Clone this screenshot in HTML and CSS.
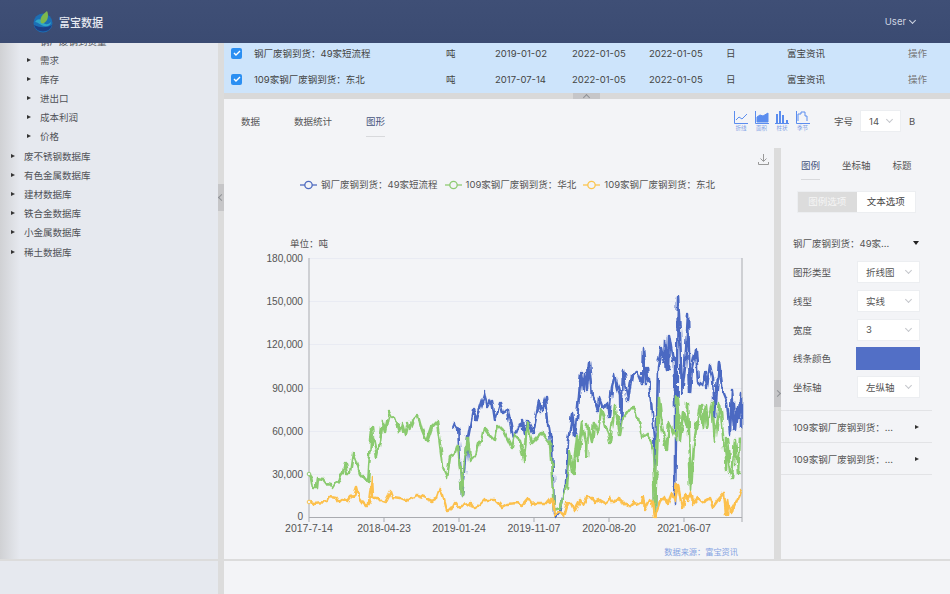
FILE: index.html
```html
<!DOCTYPE html>
<html lang="zh-CN">
<head>
	<meta charset="UTF-8">
	<title>富宝数据</title>
	<link rel="stylesheet" href="styles.css">
</head>
<body>
	<div class="header">
		<div class="brand">
			<svg class="logo" width="20" height="22" viewBox="0 0 20 22">
				<circle cx="10" cy="12" r="9.5" fill="#1c6fb5"/>
				<path d="M1 14a9.5 9.5 0 0 0 18 0c-5 3-12 3-18 0z" fill="#1d3f86"/>
				<path d="M2 11c3-4 6-3 8 0s5 3 8 0c0 3-3 5-7 4s-6-4-9-4z" fill="#2fa6c9"/>
				<path d="M8 12C6 7 10 3 14 0c2 4 1 10-3 12-1 .5-2 .5-3 0z" fill="#7db84c"/>
			</svg>
			<span class="brand-name">富宝数据</span>
		</div>
		<div class="user">User <i class="chev chev-light"></i></div>
	</div>

	<div class="main">
		<div class="side">
			<ul class="tree">
				<li class="sub"><i class="tri"></i>钢厂废钢到货量</li>
				<li class="sub"><i class="tri"></i>需求</li>
				<li class="sub"><i class="tri"></i>库存</li>
				<li class="sub"><i class="tri"></i>进出口</li>
				<li class="sub"><i class="tri"></i>成本利润</li>
				<li class="sub"><i class="tri"></i>价格</li>
				<li><i class="tri"></i>废不锈钢数据库</li>
				<li><i class="tri"></i>有色金属数据库</li>
				<li><i class="tri"></i>建材数据库</li>
				<li><i class="tri"></i>铁合金数据库</li>
				<li><i class="tri"></i>小金属数据库</li>
				<li><i class="tri"></i>稀土数据库</li>
			</ul>
		</div>
		<div class="split-v">
			<span class="handle handle-side"><i class="chev chev-left"></i></span>
		</div>
		<div class="content">
			<div class="tbl">
				<div class="tbl-row">
					<span class="check"><svg width="8" height="8" viewBox="0 0 8 8"><path d="M1 4l2 2 4-4" fill="none" stroke="#fff" stroke-width="1.4"/></svg></span>
					<span class="c-name">钢厂废钢到货：49家短流程</span>
					<span class="c-unit">吨</span>
					<span class="c-date">2019-01-02</span>
					<span class="c-date">2022-01-05</span>
					<span class="c-date">2022-01-05</span>
					<span class="c-freq">日</span>
					<span class="c-src">富宝资讯</span>
					<span class="c-op">操作</span>
				</div>
				<div class="tbl-row">
					<span class="check"><svg width="8" height="8" viewBox="0 0 8 8"><path d="M1 4l2 2 4-4" fill="none" stroke="#fff" stroke-width="1.4"/></svg></span>
					<span class="c-name">109家钢厂废钢到货：东北</span>
					<span class="c-unit">吨</span>
					<span class="c-date">2017-07-14</span>
					<span class="c-date">2022-01-05</span>
					<span class="c-date">2022-01-05</span>
					<span class="c-freq">日</span>
					<span class="c-src">富宝资讯</span>
					<span class="c-op">操作</span>
				</div>
			</div>
			<div class="split-h">
				<span class="handle handle-top"><i class="chev chev-up"></i></span>
			</div>
			<div class="panel">
				<div class="panel-top">
					<div class="tabs">
						<span class="tab">数据</span>
						<span class="tab">数据统计</span>
						<span class="tab active">图形</span>
					</div>
					<div class="types">
						<div class="type">
							<svg width="14" height="13" viewBox="0 0 14 13" fill="none" stroke="#5b8def"><path d="M.5 0v12.5H14"/><path d="M2 9l3-3 3 2 5-5"/></svg>
							<span>折线</span>
						</div>
						<div class="type">
							<svg width="14" height="13" viewBox="0 0 14 13" fill="none" stroke="#5b8def"><path d="M.5 0v12.5H14"/><path d="M2 11V6l3-2 3 1 5-3v9z" fill="#5b8def"/></svg>
							<span>面积</span>
						</div>
						<div class="type">
							<svg width="14" height="13" viewBox="0 0 14 13" fill="#5b8def"><path d="M1 3h2v9H1zM4 0h2v12H4zM7 4h2v8H7zM11 9h2v3h-2z"/><path d="M0 12.5h14" stroke="#5b8def"/></svg>
							<span>柱状</span>
						</div>
						<div class="type">
							<svg width="14" height="13" viewBox="0 0 14 13" fill="none" stroke="#5b8def"><path d="M.5 0v12.5H14"/><path d="M2 10V3h3V1h4v4h2v5"/></svg>
							<span>季节</span>
						</div>
					</div>
					<span class="size-label">字号</span>
					<div class="select select-size">14 <i class="chev"></i></div>
					<span class="bold">B</span>
				</div>
				<div class="panel-body">
					<div class="chart">
						<svg class="download" width="11" height="11" viewBox="0 0 11 11" fill="none" stroke="#999"><path d="M5.5 0v7M2.5 4.5l3 3 3-3M.5 8v2.5h10V8"/></svg>
						<div class="legend">
							<span class="legend-item">
								<svg width="17" height="10" viewBox="0 0 17 10" fill="#f3f4f7" stroke="#4f6bc0" stroke-width="1.3"><path d="M0 5h17"/><circle cx="8.500" cy="5" r="3.700"/></svg>
								钢厂废钢到货：49家短流程
							</span>
							<span class="legend-item">
								<svg width="17" height="10" viewBox="0 0 17 10" fill="#f3f4f7" stroke="#8ecb72" stroke-width="1.3"><path d="M0 5h17"/><circle cx="8.500" cy="5" r="3.700"/></svg>
								109家钢厂废钢到货：华北
							</span>
							<span class="legend-item">
								<svg width="17" height="10" viewBox="0 0 17 10" fill="#f3f4f7" stroke="#fbc54f" stroke-width="1.3"><path d="M0 5h17"/><circle cx="8.500" cy="5" r="3.700"/></svg>
								109家钢厂废钢到货：东北
							</span>
						</div>
						<svg class="plot" width="550" height="337" viewBox="224 222 550 337">
							<defs>
								<filter id="rough" filterUnits="userSpaceOnUse" x="300" y="250" width="450" height="275" color-interpolation-filters="sRGB">
									<feTurbulence type="fractalNoise" baseFrequency="0.22 0.1" numOctaves="1" seed="4"/>
									<feDisplacementMap in="SourceGraphic" scale="7" xChannelSelector="R" yChannelSelector="G"/>
									<feGaussianBlur stdDeviation="0.45"/>
								</filter>
							</defs>
							<g stroke="#e9ebf3">
								<path d="M309 258.500H742M309 301.500H742M309 344.500H742M309 388.500H742M309 431.500H742M309 474.500H742"/>
							</g>
							<g stroke="#a9abb0" fill="none">
								<path d="M309 258V522M742 258V522M309 517.500H742"/>
								<path d="M384 517v5M459 517v5M534 517v5M609 517v5M684 517v5"/>
							</g>
							<text class="unit" x="290" y="247">单位：吨</text>
							<g class="y-labels">
								<text x="303" y="262">180,000</text>
								<text x="303" y="305">150,000</text>
								<text x="303" y="348">120,000</text>
								<text x="303" y="392">90,000</text>
								<text x="303" y="435">60,000</text>
								<text x="303" y="478">30,000</text>
								<text x="303" y="520">0</text>
							</g>
							<g class="x-labels">
								<text x="309" y="531.500">2017-7-14</text>
								<text x="384" y="531.500">2018-04-23</text>
								<text x="459" y="531.500">2019-01-24</text>
								<text x="534" y="531.500">2019-11-07</text>
								<text x="609" y="531.500">2020-08-20</text>
								<text x="684" y="531.500">2021-06-07</text>
							</g>
							<g filter="url(#rough)">
								<polyline class="line blue" points="453,428 455,423 458,428 459,445 462,495 465,470 468,437 473,410 477,420 480,408 485,392 488,408 492,400 495,420 500,403 503,413 508,410 513,438 517,433 522,420 524,435 527,421 533,433 539,402 542,412 546,397 548,423 552,447 554,513 556,517 560,512 566,483 568,440 570,430 572,413 575,437 578,407 581,372 583,390 585,373 587,390 589,363 592,397 595,402 598,410 599,397 603,408 607,403 609,417 612,387 615,375 620,397 621,428 623,370 628,400 632,375 638,373 642,383 643,348 646,383 648,367 650,390 655,450 655,510 658,367 661,348 664,363 665,340 668,370 669,335 673,360 675,357 675,503 678,297 680,333 682,393 685,367 688,315 690,393 692,367 696,350 698,383 702,387 705,373 707,387 710,365 713,378 715,417 719,362 723,393 727,403 730,433 732,390 735,430 737,407 738,417 741,393 741,428"/>
								<polyline class="line green" points="309,474 311,477 313,488 317,488 318,478 323,479 326,483 330,484 333,488 336,483 339,482 341,474 343,472 345,464 347,473 350,473 353,453 357,463 360,473 368,482 372,428 373,437 377,457 380,442 383,420 385,432 389,412 392,418 395,417 400,432 402,423 405,435 408,422 410,430 415,417 418,415 422,430 427,442 432,427 437,422 439,437 443,468 447,477 450,457 455,454 458,445 461,480 462,495 465,460 468,438 470,460 475,455 478,443 482,442 485,428 490,435 495,440 498,425 503,430 512,448 515,435 520,440 524,460 527,423 532,443 537,438 542,433 550,443 554,510 560,508 567,487 570,450 573,472 577,438 578,460 582,422 587,457 588,425 592,442 594,423 598,433 601,410 603,415 610,442 615,405 620,435 623,418 632,407 637,413 642,437 647,433 653,450 655,510 659,398 662,427 667,450 669,422 676,440 677,397 680,440 683,413 687,427 688,403 691,490 694,445 697,423 700,405 703,428 705,405 707,427 712,402 715,442 720,402 726,470 727,438 730,472 732,478 735,440 738,473 740,438 741,437"/>
								<polyline class="line yellow" points="309,502 313,503 327,502 330,496 335,497 339,503 343,499 347,501 350,497 353,496 356,487 358,495 363,502 367,506 369,503 372,478 373,497 375,499 377,497 382,502 385,503 388,497 391,491 393,497 400,498 407,501 417,495 423,497 432,501 437,498 440,489 443,495 447,510 452,508 455,502 458,507 463,505 472,503 475,508 480,505 485,500 495,500 502,507 507,504 517,503 522,505 528,498 532,504 538,503 548,503 552,498 554,508 555,515 560,512 564,517 568,503 572,503 575,510 580,500 583,505 587,498 592,498 595,502 600,500 605,503 610,498 613,503 617,499 623,502 628,507 633,502 642,505 643,497 645,510 650,500 653,503 655,516 660,502 665,497 668,503 672,493 675,500 678,485 682,508 685,495 688,500 691,492 693,503 698,498 703,502 710,498 713,507 718,500 724,493 726,515 728,500 730,513 735,505 738,498 741,489"/>
							</g>
							<circle cx="309" cy="474" r="1.800" fill="#f3f4f7" stroke="#8ecb72"/>
							<circle cx="309" cy="502" r="1.800" fill="#f3f4f7" stroke="#fbc54f"/>
							<text class="source" x="738" y="555">数据来源：富宝资讯</text>
						</svg>
					</div>
					<div class="split-v split-chart">
						<span class="handle handle-opts"><i class="chev chev-right"></i></span>
					</div>
					<div class="opts">
						<div class="opt-tabs">
							<span class="opt-tab active">图例</span>
							<span class="opt-tab">坐标轴</span>
							<span class="opt-tab">标题</span>
						</div>
						<div class="seg">
							<span class="seg-item on">图例选项</span>
							<span class="seg-item">文本选项</span>
						</div>
						<div class="series-head">
							<span>钢厂废钢到货：49家...</span>
							<i class="tri tri-down"></i>
						</div>
						<div class="form">
							<div class="form-row"><label>图形类型</label><div class="select">折线图 <i class="chev"></i></div></div>
							<div class="form-row"><label>线型</label><div class="select">实线 <i class="chev"></i></div></div>
							<div class="form-row"><label>宽度</label><div class="select">3 <i class="chev"></i></div></div>
							<div class="form-row"><label>线条颜色</label><div class="swatch"></div></div>
							<div class="form-row"><label>坐标轴</label><div class="select">左纵轴 <i class="chev"></i></div></div>
						</div>
						<div class="series-row"><span>109家钢厂废钢到货：...</span><i class="tri"></i></div>
						<div class="series-row"><span>109家钢厂废钢到货：...</span><i class="tri"></i></div>
					</div>
				</div>
			</div>
		</div>
	</div>

	<div class="foot">
		<div class="foot-side"></div>
		<div class="foot-gap"></div>
		<div class="foot-main"></div>
	</div>
</body>
</html>
```

FILE: styles.css
```css
*{
	margin: 0;
	padding: 0;
	box-sizing: border-box;
}
ul{
	list-style: none;
}
i{
	font-style: normal;
}
body{
	width: 950px;
	height: 594px;
	overflow: hidden;
	font-family: "Inter", "Noto Sans CJK SC", sans-serif;
	font-size: 9.5px;
	color: #555;
	background-color: #f3f4f7;
}

/* header */
.header{
	display: flex;
	align-items: center;
	justify-content: space-between;
	height: 43px;
	padding: 0 35px 0 33px;
	background: linear-gradient(#3f4f76, #3b4b72);
	color: #e8ebf2;
}
.brand{
	display: flex;
	align-items: center;
	gap: 6px;
}
.brand-name{
	font-size: 11px;
	font-weight: 500;
}
.user{
	display: flex;
	align-items: center;
	gap: 4px;
	font-size: 9.5px;
	color: #cfd5e2;
}

/* small shapes */
.chev{
	display: inline-block;
	width: 5px;
	height: 5px;
	border-right: 1px solid #c4c6cb;
	border-bottom: 1px solid #c4c6cb;
	transform: rotate(45deg);
}
.chev-light{
	border-color: #cfd5e2;
	margin-top: -3px;
}
.chev-left{
	transform: rotate(135deg);
	border-color: #8f9196;
}
.chev-right{
	transform: rotate(-45deg);
	border-color: #8f9196;
}
.chev-up{
	transform: rotate(225deg);
	border-color: #8f9196;
	margin-top: 3px;
}
.tri{
	display: inline-block;
	width: 0;
	height: 0;
	border-left: 4px solid #333;
	border-top: 2.5px solid transparent;
	border-bottom: 2.5px solid transparent;
}
.tri-down{
	border-left: 3px solid transparent;
	border-right: 3px solid transparent;
	border-top: 4px solid #222;
	border-bottom: 0;
}

/* layout */
.main{
	display: flex;
	height: 516px;
}
.side{
	width: 218px;
	overflow: hidden;
	background: linear-gradient(to right, #d0d1d4, #e6e9ef 20px);
}
.split-v{
	position: relative;
	width: 6px;
	flex-shrink: 0;
	background-color: #dcdcdc;
}
.handle{
	position: absolute;
	display: flex;
	align-items: center;
	justify-content: center;
	background-color: #c6c6c8;
}
.handle-side{
	left: 0;
	top: 141px;
	width: 6px;
	height: 27px;
}
.handle-top{
	left: 349px;
	top: 0;
	width: 27px;
	height: 6px;
}
.handle-opts{
	left: 0;
	top: 232px;
	width: 7px;
	height: 27px;
}
.content{
	display: flex;
	flex-direction: column;
	flex: 1;
	min-width: 0;
}

/* tree */
.tree{
	margin-top: -12.1px;
}
.tree li{
	display: flex;
	align-items: center;
	height: 19.2px;
	padding-left: 11px;
	gap: 9px;
	color: #4f5156;
}
.tree li.sub{
	padding-left: 27px;
}

/* table */
.tbl{
	height: 50px;
	overflow: hidden;
	background-color: #cde4fb;
	color: #444;
}
.tbl-row{
	display: flex;
	align-items: center;
	height: 26px;
	padding-left: 7px;
}
.tbl-row:first-child{
	margin-top: -3px;
}
.check{
	display: flex;
	align-items: center;
	justify-content: center;
	width: 11px;
	height: 11px;
	margin-right: 12px;
	border-radius: 2px;
	background-color: #2b8ff2;
}
.c-name{
	width: 192px;
}
.c-unit{
	width: 49px;
}
.c-date{
	width: 77px;
}
.c-freq{
	width: 61px;
}
.c-src{
	width: 121px;
}
.c-op{
	color: #777;
}
.split-h{
	position: relative;
	height: 6px;
	background-color: #d9d9d9;
}

/* panel */
.panel{
	flex: 1;
	display: flex;
	flex-direction: column;
	min-height: 0;
	background-color: #f3f4f7;
}
.panel-top{
	display: flex;
	align-items: center;
	height: 49px;
	padding: 0 0 5px 17px;
}
.tabs{
	display: flex;
	gap: 34px;
	width: 493px;
}
.tab{
	position: relative;
}
.tab.active{
	color: #45537c;
}
.tab.active::after{
	content: "";
	position: absolute;
	left: 0;
	right: 0;
	bottom: -9px;
	height: 1px;
	background-color: #d8d9dc;
}
.types{
	display: flex;
	gap: 6.500px;
	width: 100px;
}
.type{
	display: flex;
	flex-direction: column;
	align-items: center;
	gap: 1px;
	width: 14px;
	color: #7d9fe6;
	font-size: 5.500px;
	line-height: 7px;
	white-space: nowrap;
}
.size-label{
	margin-right: 7px;
}
.select{
	display: flex;
	align-items: center;
	justify-content: space-between;
	width: 63px;
	height: 22px;
	padding: 0 8px;
	background-color: #fff;
	border: 1px solid #eceef1;
}
.select .chev{
	margin-top: -3px;
}
.select-size{
	width: 41px;
}
.bold{
	margin-left: 8px;
}

.panel-body{
	flex: 1;
	display: flex;
	min-height: 0;
}
.chart{
	position: relative;
	width: 550px;
	flex-shrink: 0;
}
.download{
	position: absolute;
	right: 5px;
	top: 6px;
}
.legend{
	display: flex;
	gap: 7px;
	height: 74px;
	padding: 30px 0 0 76px;
	line-height: 14px;
}
.legend-item{
	display: flex;
	align-items: center;
	gap: 4px;
	height: 14px;
}
.plot{
	display: block;
}
.plot text{
	font-family: "Inter", "Noto Sans CJK SC", sans-serif;
	font-size: 9.500px;
	fill: #555;
}
.plot .y-labels text{
	text-anchor: end;
	font-family: "Liberation Sans", sans-serif;
	font-size: 10.100px;
}
.plot .x-labels text{
	text-anchor: middle;
	font-family: "Liberation Sans", sans-serif;
	font-size: 10.500px;
}
.plot .source{
	text-anchor: end;
	font-size: 8.200px;
	fill: #84a3e2;
}
.line{
	fill: none;
	stroke-width: 2.600;
	stroke-linejoin: round;
}
.blue{
	stroke: #4b69c2;
}
.green{
	stroke: #8aca6f;
}
.yellow{
	stroke: #fcc04c;
}

/* options */
.split-chart{
	width: 7px;
}
.opts{
	width: 151px;
	flex-shrink: 0;
}
.opt-tabs{
	display: flex;
	gap: 22px;
	height: 32px;
	padding-left: 20px;
}
.opt-tab{
	height: 32px;
	line-height: 36px;
}
.opt-tab.active{
	color: #45537c;
	border-bottom: 1px solid #d8d9dc;
}
.seg{
	display: flex;
	width: 119px;
	height: 22px;
	margin: 11px 0 0 16px;
	border: 1px solid #eceef1;
	background-color: #fff;
}
.seg-item{
	flex: 1;
	line-height: 20px;
	text-align: center;
	color: #444;
}
.seg-item.on{
	background-color: #dcdcdc;
	color: #f5f5f5;
}
.series-head{
	display: flex;
	align-items: center;
	justify-content: space-between;
	height: 22px;
	margin-top: 19px;
	padding: 0 13px 0 12px;
}
.form{
	display: flex;
	flex-direction: column;
	gap: 6.750px;
	margin-top: 7px;
	padding: 0 12px 12px;
	border-bottom: 1px solid #e2e3e6;
}
.form-row{
	display: flex;
	align-items: center;
	justify-content: space-between;
	height: 22px;
}
.swatch{
	width: 64px;
	height: 23px;
	background-color: #526fc6;
}
.series-row{
	display: flex;
	align-items: center;
	justify-content: space-between;
	height: 32px;
	padding: 0 13px 0 12px;
	border-bottom: 1px solid #e2e3e6;
}

/* bottom strip */
.foot{
	display: flex;
	height: 35px;
	border-top: 2px solid #dcdcdc;
}
.foot-side{
	width: 218px;
	background-color: #e6e9ef;
}
.foot-gap{
	width: 6px;
	background-color: #dcdcdc;
}
.foot-main{
	flex: 1;
	background-color: #f3f4f7;
}
```
